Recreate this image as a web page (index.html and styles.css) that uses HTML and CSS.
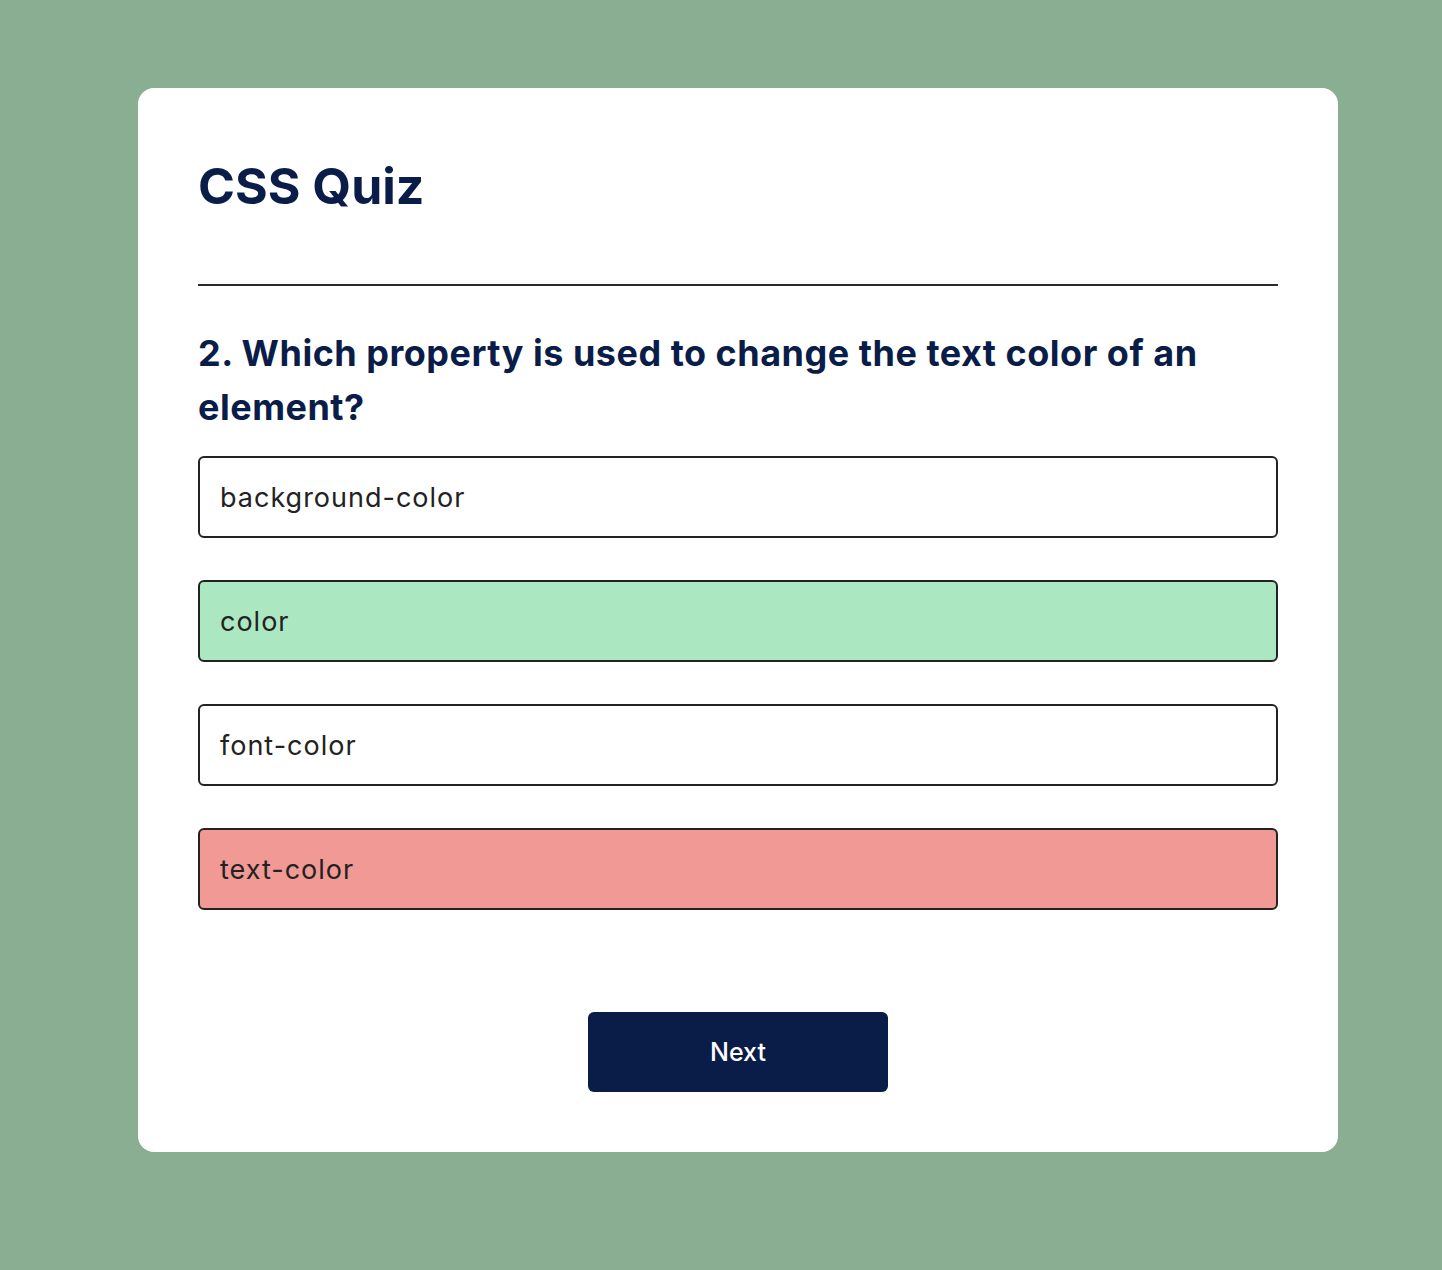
FILE: index.html
```html
<!DOCTYPE html>
<html lang="en">
<head>
<meta charset="utf-8">
<title>CSS Quiz</title>
<link rel="stylesheet" href="styles.css">
</head>
<body>
<main class="card">
  <h1 class="title">CSS Quiz</h1>
  <hr class="divider">
  <h2 class="question">2. Which property is used to change the text color of an element?</h2>
  <ul class="options">
    <li class="option">background-color</li>
    <li class="option correct">color</li>
    <li class="option">font-color</li>
    <li class="option wrong">text-color</li>
  </ul>
  <div class="actions">
    <button class="next">Next</button>
  </div>
</main>
</body>
</html>
```

FILE: styles.css
```css
html, body {
  margin: 0;
  padding: 0;
}
body {
  background: #8aae92;
  font-family: Inter, "Noto Sans", sans-serif;
  min-height: 1270px;
}
.card {
  box-sizing: border-box;
  width: 1200px;
  margin: 88px 0 0 138px;
  background: #ffffff;
  border-radius: 16px;
  padding: 60px 60px 60px;
}
.title {
  margin: 0;
  font-size: 50px;
  line-height: 76px;
  font-weight: 700;
  color: #0a1c48;
}
.divider {
  margin: 60px 0 0;
  border: 0;
  height: 2px;
  background: #2a2a2a;
}
.question {
  margin: 40px 0 22px;
  font-size: 36px;
  line-height: 54px;
  letter-spacing: 0.5px;
  font-weight: 700;
  color: #0a1c48;
}
.options {
  list-style: none;
  margin: 0;
  padding: 0;
  display: flex;
  flex-direction: column;
  gap: 42px;
}
.option {
  box-sizing: border-box;
  height: 82px;
  border: 2px solid #222222;
  border-radius: 6px;
  padding: 0 20px;
  display: flex;
  align-items: center;
  font-size: 27px;
  letter-spacing: 1px;
  color: #222222;
  background: #ffffff;
}
.option.correct {
  background: #abe8c1;
}
.option.wrong {
  background: #f09995;
}
.actions {
  display: flex;
  justify-content: center;
  margin-top: 102px;
}
.next {
  width: 300px;
  height: 80px;
  border: 0;
  border-radius: 6px;
  background: #0a1c48;
  color: #ffffff;
  font-family: inherit;
  font-size: 25px;
  font-weight: 500;
}
```
